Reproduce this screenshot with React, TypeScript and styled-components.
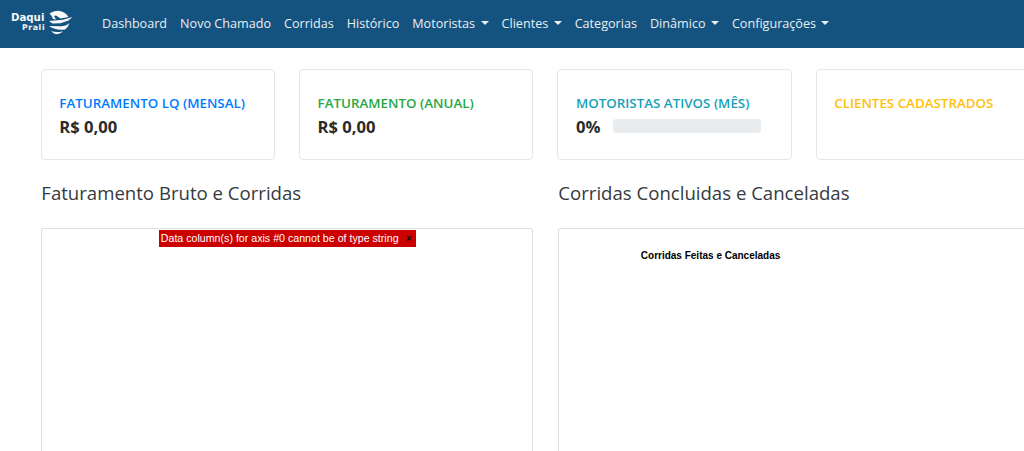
import React from "react";
import styled, { createGlobalStyle } from "styled-components";

const Global = createGlobalStyle`
  html, body { margin: 0; padding: 0; background: #fff; overflow: hidden; height: 451px; }
  body { font-family: "Open Sans", "Noto Sans", "Liberation Sans", sans-serif; color: #212529; }
`;
const Page = styled.div`width: 1024px; height: 451px; overflow: hidden;`;
const Nav = styled.nav`
  height: 48px; background: #14537f; display: flex; align-items: center; padding-left: 10px;
`;
const Brand = styled.div`width: 76px; height: 36px; margin-right: 16px; margin-top: -4px; flex: none;`;
const NavList = styled.div`display: flex; gap: 13px; align-items: center; margin-top: -2px;`;
const NavLink = styled.span<{ $caret?: boolean }>`
  font-size: 12.62px; color: #e9eff4; white-space: nowrap; display: inline-flex; align-items: center;
  ${(p) => p.$caret && `&::after { content: ""; margin-left: 5.4px; border-top: 4px solid #e9eff4; border-left: 4px solid transparent; border-right: 4px solid transparent; }`}
`;
const Content = styled.main`
  width: 1070px; padding: 21px 0 0 40.8px; box-sizing: border-box;
`;
const Cards = styled.section`display: grid; grid-template-columns: repeat(4, 234.3px); gap: 24px; `;
const Card = styled.div`
  height: 91px; box-sizing: border-box; border: 1px solid #e3e6ea; border-radius: 4px; padding: 25px 17px 0 17.5px; background: #fff;
`;
const CardTitle = styled.div<{ $color: string }>`
  font-size: 13.35px; font-weight: 600; line-height: 16px; color: ${(p) => p.$color}; white-space: nowrap;
`;
const CardValue = styled.div`font-size: 16.6px; font-weight: 700; line-height: 22px; margin-top: 5px; color: #2b2b2b;`;
const ProgressRow = styled.div`display: flex; align-items: center; gap: 13px; margin-top: 5px;`;
const Percent = styled(CardValue)`margin-top: 0;`;
const Progress = styled.div`width: 148px; height: 14px; border-radius: 3px; background: #e9ecef; margin-top: -3px;`;
const Charts = styled.section`display: grid; grid-template-columns: 492.5px 492px; gap: 24.5px; margin-top: 21px;`;
const ChartColumn = styled.div`display: flex; flex-direction: column;`;
const ChartTitle = styled.h2`font-size: 18.6px; font-weight: 400; line-height: 24px; margin: 0 0 23px 0.5px; color: #343a40; white-space: nowrap;`;
const ChartBox = styled.div`
  height: 300px; border: 1px solid #dcdfe2; border-radius: 2px; box-sizing: border-box; position: relative; background: #fff;
`;
const ChartError = styled.div`
  position: absolute; top: 1px; left: 117px; width: 257px; height: 17px; box-sizing: border-box; background: #c00; color: #fff;
  font: 10.65px/17px "Liberation Sans", Arial, sans-serif; padding-left: 2px; display: flex; justify-content: space-between; white-space: nowrap;
`;
const Close = styled.span`color: #111; font-weight: 700; margin-right: 4px; font-size: 10px;`;
const ChartCaption = styled.div`
  font: 700 10px/14px "Liberation Sans", Arial, sans-serif; color: #000; padding: 20px 0 0 82px; white-space: nowrap;
`;

const Logo = () => (
  <svg width="76" height="36" viewBox="0 0 76 36" aria-label="Daqui Prali">
    <text x="1" y="17" fontFamily="DejaVu Sans, sans-serif" fontWeight="700" fontSize="10.2" fill="#f6f8fa">Daqui</text>
    <text x="12" y="26" fontFamily="DejaVu Sans, sans-serif" fontWeight="700" fontSize="7.8" letterSpacing=".6" fill="#f6f8fa">Prali</text>
    <path d="M39.5 9.5 a13 13 0 0 1 19 3.5 l-8 1.5 l-4.5 -3 l-2 .5 l2 3.5 l-3 -.5 a12 12 0 0 0 -3.5 -5.5 z" fill="#f6f8fa" />
    <path d="M39 17 l14 -1.2 l9.5 -2.8 l-4 3.6 l-8 2.6 l-8 .3 z" fill="#f6f8fa" />
    <path d="M39 22 l11 .3 a13 13 0 0 0 9.5 -3.3 a12 12 0 0 1 -4.5 6.5 a22 22 0 0 1 -16 -3.5 z" fill="#f6f8fa" />
    <path d="M41 27 a18 18 0 0 0 11.5 .2 l-.5 1 a12 12 0 0 1 -6 2 a12 12 0 0 1 -5 -3.2 z" fill="#f6f8fa" />
  </svg>
);

const links: [string, boolean][] = [
  ["Dashboard", false], ["Novo Chamado", false], ["Corridas", false], ["Histórico", false],
  ["Motoristas", true], ["Clientes", true], ["Categorias", false], ["Dinâmico", true], ["Configurações", true],
];

export default function App() {
  return (
    <Page>
      <Global />
      <Nav>
        <Brand><Logo /></Brand>
        <NavList>
          {links.map(([label, caret]) => <NavLink key={label} $caret={caret}>{label}</NavLink>)}
        </NavList>
      </Nav>
      <Content>
        <Cards>
          <Card><CardTitle $color="#007bff">FATURAMENTO LQ (MENSAL)</CardTitle><CardValue>R$ 0,00</CardValue></Card>
          <Card><CardTitle $color="#28a745">FATURAMENTO (ANUAL)</CardTitle><CardValue>R$ 0,00</CardValue></Card>
          <Card>
            <CardTitle $color="#17a2b8">MOTORISTAS ATIVOS (MÊS)</CardTitle>
            <ProgressRow><Percent>0%</Percent><Progress /></ProgressRow>
          </Card>
          <Card><CardTitle $color="#ffc107">CLIENTES CADASTRADOS</CardTitle></Card>
        </Cards>
        <Charts>
          <ChartColumn>
            <ChartTitle>Faturamento Bruto e Corridas</ChartTitle>
            <ChartBox>
              <ChartError>Data column(s) for axis #0 cannot be of type string<Close>×</Close></ChartError>
            </ChartBox>
          </ChartColumn>
          <ChartColumn>
            <ChartTitle>Corridas Concluidas e Canceladas</ChartTitle>
            <ChartBox><ChartCaption>Corridas Feitas e Canceladas</ChartCaption></ChartBox>
          </ChartColumn>
        </Charts>
      </Content>
    </Page>
  );
}
